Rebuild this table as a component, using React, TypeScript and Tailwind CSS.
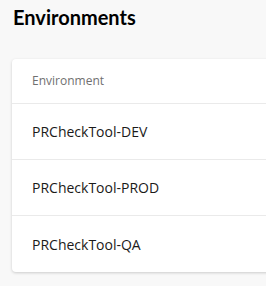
export default function App() {
  const envs = ['PRCheckTool-DEV', 'PRCheckTool-PROD', 'PRCheckTool-QA']

  return (
    <div className="min-h-screen bg-[#f8f8f8] pl-3 pt-[3px] font-['Open_Sans',sans-serif] overflow-hidden">
      <h1 className="text-[20px] leading-[28px] font-bold text-black pl-[1px] font-['Lato',sans-serif]">Environments</h1>

      {/* table card, runs off the right edge */}
      <div className="mt-7 w-[300px] bg-white rounded-[4px] shadow-[0_1px_3px_rgba(0,0,0,0.18)]">
        <div className="h-[45px] flex items-center pl-5 text-[12px] text-[#707070] border-b border-[#eaeaea]">
          Environment
        </div>
        {envs.map((name, i) => (
          <div
            key={name}
            className={`h-[56px] flex items-center pl-5 text-[14px] text-[#1b1a19] ${
              i < envs.length - 1 ? 'border-b border-[#eaeaea]' : ''
            }`}
          >
            {name}
          </div>
        ))}
      </div>
    </div>
  )
}
